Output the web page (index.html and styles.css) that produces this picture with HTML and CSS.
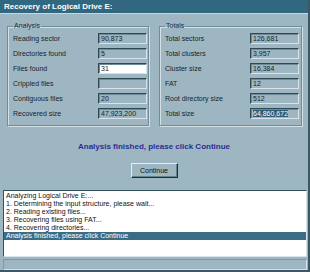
FILE: index.html
```html
<!DOCTYPE html>
<html lang="en">
<head>
  <meta charset="UTF-8" />
  <title>Recovery of Logical Drive E:</title>
  <link rel="stylesheet" href="styles.css">
</head>
<body>
  <div class="window">
    <div class="titlebar">Recovery of Logical Drive E:</div>

    <div class="groups">
      <fieldset class="group">
        <legend>Analysis</legend>
        <div class="row"><span>Reading sector</span><div class="field">90,873</div></div>
        <div class="row"><span>Directories found</span><div class="field">5</div></div>
        <div class="row"><span>Files found</span><div class="field white">31</div></div>
        <div class="row"><span>Crippled files</span><div class="field"></div></div>
        <div class="row"><span>Contiguous files</span><div class="field">20</div></div>
        <div class="row"><span>Recovered size</span><div class="field">47,923,200</div></div>
      </fieldset>
      <fieldset class="group totals">
        <legend>Totals</legend>
        <div class="row"><span>Total sectors</span><div class="field">126,681</div></div>
        <div class="row"><span>Total clusters</span><div class="field">3,957</div></div>
        <div class="row"><span>Cluster size</span><div class="field">16,384</div></div>
        <div class="row"><span>FAT</span><div class="field">12</div></div>
        <div class="row"><span>Root directory size</span><div class="field">512</div></div>
        <div class="row"><span>Total size</span><div class="field"><span class="sel">64,860,672</span></div></div>
      </fieldset>
    </div>

    <div class="message">Analysis finished, please click Continue</div>

    <div class="actions">
      <button class="btn">Continue</button>
    </div>

    <ul class="log">
      <li>Analyzing Logical Drive E:...</li>
      <li>1. Determining the input structure, please wait...</li>
      <li>2. Reading existing files...</li>
      <li>3. Recovering files using FAT...</li>
      <li>4. Recovering directories...</li>
      <li class="active">Analysis finished, please click Continue</li>
    </ul>

    <div class="statusbar"></div>
  </div>
</body>
</html>
```

FILE: styles.css
```css
body {
  margin: 0;
  font-family: "Liberation Sans", Arial, sans-serif;
}

.window {
  width: 310px;
  height: 272px;
  background: #9db6c2;
  box-sizing: border-box;
  border-right: 2px solid #3c5866;
  border-bottom: 2px solid #3c5866;
  display: flex;
  flex-direction: column;
}

.titlebar {
  height: 13px;
  line-height: 13px;
  background: #31677f;
  color: #fff;
  font-weight: bold;
  font-size: 8px;
  padding-left: 4px;
  border-bottom: 1px solid #c8d8e0;
}

.groups {
  display: flex;
  gap: 10px;
  padding: 8px 0 0 7px;
}

.group {
  margin: 0;
  padding: 3px 0 6px 5px;
  width: 142px;
  box-sizing: border-box;
  border: 1px solid #6f8e9c;
  box-shadow: inset 1px 1px 0 #d3e0e6, 1px 1px 0 #d3e0e6;
  display: flex;
  flex-direction: column;
  gap: 4px;
}

.group.totals {
  width: 143px;
}

.group legend {
  font-size: 7px;
  line-height: 8px;
  padding: 0 1px;
  color: #1c2a30;
}

.row {
  display: grid;
  grid-template-columns: 85px 49px;
  align-items: center;
  height: 11px;
  font-size: 7px;
  color: #15242a;
}

.field {
  height: 11px;
  box-sizing: border-box;
  border: 1px solid;
  border-color: #2e4854 #d8e4ea #d8e4ea #2e4854;
  box-shadow: inset 1px 1px 0 #6e8a96;
  font-size: 7px;
  line-height: 9px;
  padding-left: 2px;
  white-space: nowrap;
  overflow: hidden;
}

.field.white {
  background: #fff;
}

.field .sel {
  background: #2e5e78;
  color: #fff;
}

.message {
  margin-top: 16px;
  text-align: center;
  font-size: 8px;
  font-weight: bold;
  color: #2b2d96;
}

.actions {
  display: flex;
  justify-content: center;
  margin-top: 12px;
}

.btn {
  width: 47px;
  height: 15px;
  padding: 0;
  font-family: inherit;
  font-size: 7px;
  color: #111;
  background: #9db6c2;
  border: 1px solid;
  border-color: #e4eef2 #1e2e36 #1e2e36 #e4eef2;
  box-shadow: inset -1px -1px 0 #62808e;
}

.log {
  list-style: none;
  margin: 12px 1px 0 3px;
  padding: 1px 0 0;
  height: 68px;
  box-sizing: border-box;
  background: #fff;
  border: 1px solid;
  border-color: #33505e #d8e4ea #d8e4ea #33505e;
  font-size: 7px;
  line-height: 8px;
  color: #111;
}

.log li {
  padding-left: 2px;
  white-space: nowrap;
}

.log li.active {
  background: #3b6c86;
  color: #fff;
}

.statusbar {
  margin: 2px 1px 0 3px;
  height: 9px;
  border: 1px solid;
  border-color: #7e98a4 #d3e0e6 #d3e0e6 #7e98a4;
}
```
